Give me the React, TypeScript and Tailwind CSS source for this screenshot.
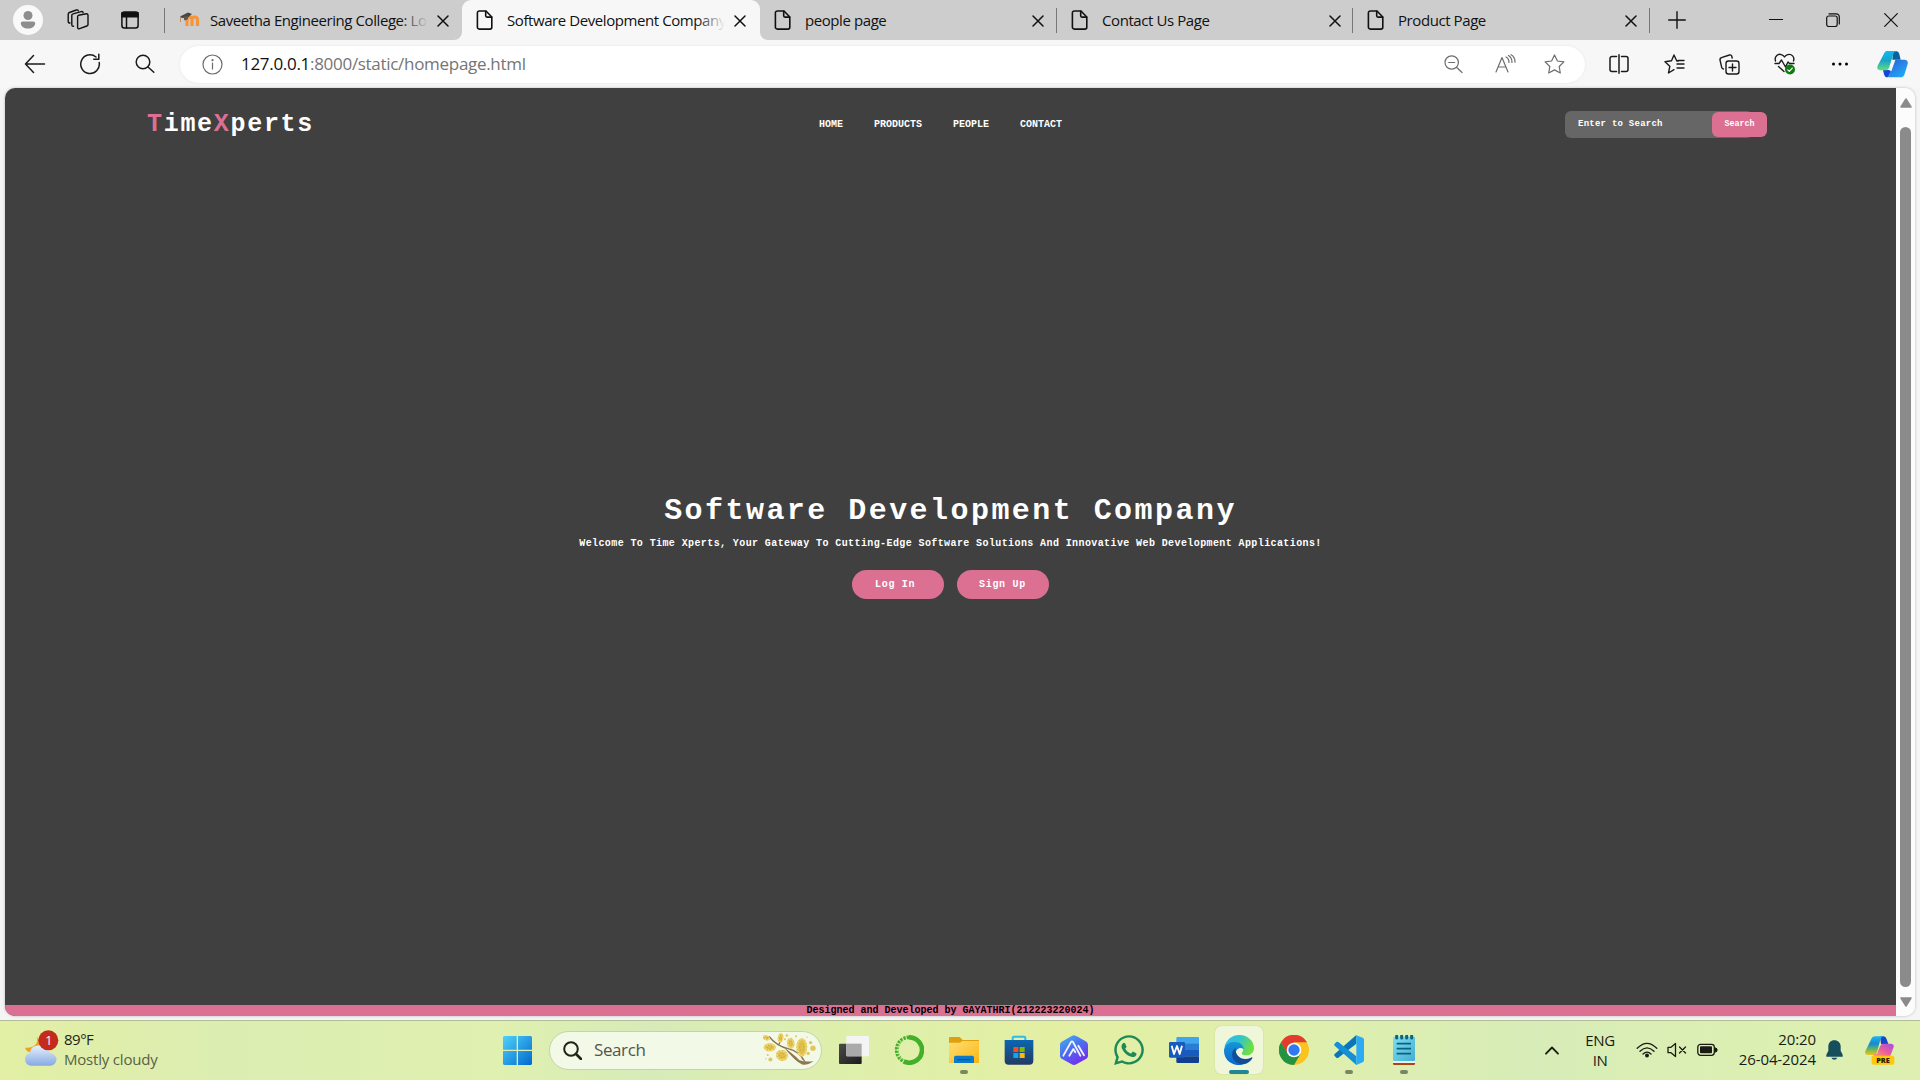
import type { ReactNode } from "react";
import { FaWhatsapp } from "react-icons/fa";

const UI = "font-['Open_Sans',sans-serif]";

function Stroke({ w, h, box, sw = 1.3, className = "", children }: { w: number; h: number; box?: string; sw?: number; className?: string; children: ReactNode }) {
  return (
    <svg width={w} height={h} viewBox={box ?? `0 0 ${w} ${h}`} fill="none" stroke="currentColor" strokeWidth={sw} strokeLinecap="round" strokeLinejoin="round" className={`shrink-0 ${className}`}>
      {children}
    </svg>
  );
}

function PageIcon() {
  return (
    <Stroke w={17} h={20} sw={1.6}>
      <path d="M3.3 1H10l5.8 6v10.2a1.9 1.9 0 0 1-1.9 1.9H3.3a1.9 1.9 0 0 1-1.9-1.9V2.9A1.9 1.9 0 0 1 3.3 1Z" />
      <path d="M9.7 1.2v4.6a1.3 1.3 0 0 0 1.3 1.3h4.6" />
    </Stroke>
  );
}

function CloseIcon() {
  return (
    <Stroke w={12} h={12} sw={1.5}>
      <path d="M1 1l10 10M11 1L1 11" />
    </Stroke>
  );
}

function MoodleIcon() {
  return (
    <svg width="22" height="16" viewBox="0 0 22 16" className="shrink-0">
      <path d="M8 14V8c0-4 5-4 5 0v6M13 8c0-4 5.500-4 5.500 0v6" fill="none" stroke="#f7933a" strokeWidth="3.200" />
      <path d="M1 4.500L9 .5l4 1.500-4 3.500-6 .5Z" fill="#4a4644" />
      <path d="M5 4.500v3.500c2 .6 3 -.2 4-1.500V4Z" fill="#5e5652" />
      <path d="M1.500 5v5" stroke="#c78b5a" strokeWidth="1" />
    </svg>
  );
}

function Tab({ title, width, icon, active = false, fade = false, sep = false }: { title: string; width: string; icon?: ReactNode; active?: boolean; fade?: boolean; sep?: boolean }) {
  return (
    <div className={`relative flex h-10 shrink-0 items-center ${width} ${active ? "rounded-t-[9px] bg-[#f7f7f7]" : ""}`}>
      {active && (
        <>
          <div className="absolute bottom-0 -left-2 h-2 w-2 bg-[#f7f7f7]"><div className="h-2 w-2 rounded-br-[8px] bg-[#cdcdcd]" /></div>
          <div className="absolute -right-2 bottom-0 h-2 w-2 bg-[#f7f7f7]"><div className="h-2 w-2 rounded-bl-[8px] bg-[#cdcdcd]" /></div>
        </>
      )}
      <div className="ml-[14px] flex w-[31px]">{icon ?? <PageIcon />}</div>
      <div className="relative -mt-px w-[218px] overflow-hidden text-[15px] leading-5 tracking-[-0.420px] whitespace-nowrap">
        {title}
        {fade && <div className={`absolute top-0 right-0 h-5 w-7 bg-gradient-to-r from-transparent ${active ? "to-[#f7f7f7]" : "to-[#cdcdcd]"}`} />}
      </div>
      <div className="ml-[9px] pt-px"><CloseIcon /></div>
      {sep && <div className="ml-auto h-[25px] w-px bg-[#777]" />}
    </div>
  );
}

function TitleBar() {
  return (
    <div className="flex h-10 items-center bg-[#cdcdcd] text-[#111]">
      <div className="ml-[13px] flex h-[30px] w-[30px] items-center justify-center rounded-full bg-[#f9f9f9]">
        <svg width="16" height="18" viewBox="0 0 16 18"><circle cx="8" cy="4.500" r="4.500" fill="#8e8e8e" /><path d="M2.500 10.500h11A1.700 1.700 0 0 1 15.200 12c0 3.500-3 5.500-7.200 5.500S.8 15.500.8 12a1.700 1.700 0 0 1 1.700-1.500Z" fill="#8e8e8e" /></svg>
      </div>
      <Stroke w={22} h={22} className="ml-6" sw={1.4}>
        <path d="M11.500 6.300l7.800-1.500a1.500 1.500 0 0 1 1.700 1.400v9.300c0 .8-.5 1.300-1.200 1.500l-7.200 2.700c-1 .4-2-.1-2-1.200V8c0-.9.300-1.500.9-1.700Z" />
        <path d="M6.500 17.300c-1 .1-1.700-.4-1.700-1.500V6.500c0-.9.500-1.400 1.300-1.600l8-2.300c1-.3 1.800 0 2 1" />
        <path d="M3 14c-1.200 0-1.800-.5-1.800-1.500V5.200c0-.9.400-1.400 1.200-1.700L9.300 1c1-.3 1.700 0 2 .8" />
      </Stroke>
      <Stroke w={18} h={18} className="ml-8" sw={1.5}>
        <rect x=".9" y=".9" width="16.200" height="16.200" rx="2.500" />
        <path d="M1 1.800h16v4H1Z" fill="currentColor" />
        <path d="M5.500 6v11" />
      </Stroke>
      <div className="ml-[25px] h-[25px] w-px bg-[#777]" />
      <Tab title="Saveetha Engineering College: Lo" width="w-[297px]" fade icon={<MoodleIcon />} />
      <Tab title="Software Development Company" width="w-[298px]" fade active />
      <Tab title="people page" width="w-[297px]" sep />
      <Tab title="Contact Us Page" width="w-[296px]" sep />
      <Tab title="Product Page" width="w-[297px]" sep />
      <Stroke w={18} h={18} className="ml-[18px]" sw={1.4}><path d="M9 .7v16.600M.7 9h16.600" /></Stroke>
      <Stroke w={14} h={14} className="ml-[83px]" sw={1.2}><path d="M.5 6.500h13" /></Stroke>
      <Stroke w={14} h={14} className="ml-[43px]" sw={1.2}><rect x=".7" y="3" width="10.500" height="10.500" rx="2" /><path d="M3 .8h7.300a3 3 0 0 1 3 3v7.200" /></Stroke>
      <Stroke w={14} h={14} className="ml-[44px]" sw={1.2}><path d="M.7 .7l12.600 12.600M13.300 .7L.7 13.300" /></Stroke>
    </div>
  );
}

function CopilotIcon() {
  return (
    <svg width="31" height="27" viewBox="0 0 93 81" className="shrink-0">
      <defs>
        <linearGradient id="cpA" x1="0" y1="0" x2="0" y2="1"><stop stopColor="#0cbaf2" /><stop offset=".5" stopColor="#18a5c8" /><stop offset="1" stopColor="#62de80" /></linearGradient>
        <linearGradient id="cpB" x1="0" y1="0" x2="1" y2="1"><stop stopColor="#1a5fcb" /><stop offset=".5" stopColor="#2a86ea" /><stop offset="1" stopColor="#16b9f4" /></linearGradient>
      </defs>
      <path d="M48 1h11c6 0 8 7 9 13l3 12H46Z" fill="#08639c" />
      <path d="M22 57h22l-8 16c-2 6-6 7-10 5-5-3-6-13-8-21Z" fill="#1247d4" />
      <path d="M56 26h26c8 0 12 5 10 13L83 68c-2 8-6 11-13 11H27c7-1 9-5 11-11l9-32c2-7 4-10 9-10Z" fill="url(#cpB)" />
      <path d="M37 58l10-31h8L43 61Z" fill="#f7f7f7" />
      <path d="M22 6c2-4 5-6 10-6h25c-5 2-7 6-9 12L37 48c-2 7-5 10-12 10H10C2 58-1 52 2 44Z" fill="url(#cpA)" />
    </svg>
  );
}

function Toolbar() {
  return (
    <div className="flex h-12 items-center bg-[#f7f7f7] text-[#1b1b1b]">
      <Stroke w={22} h={20} className="ml-6" sw={1.5}><path d="M20.500 10H1.500M9.500 1.500L1.500 10l8 8.500" /></Stroke>
      <Stroke w={22} h={22} className="ml-[33px]" sw={1.5}><path d="M20.200 9.500A9.300 9.300 0 1 1 17 4M19.800 1.300v5h-5" /></Stroke>
      <Stroke w={20} h={20} className="ml-[34px]" sw={1.5}><circle cx="8" cy="8" r="6.800" /><path d="M13 13l5.800 5.300" /></Stroke>
      <div className="ml-[25px] flex h-[37px] w-[1405px] items-center rounded-full bg-white text-[#6d6d6d] shadow-[0_0_3px_rgba(0,0,0,0.08)]">
        <Stroke w={21} h={21} className="ml-[22px]" sw={1.2}><circle cx="10.500" cy="10.500" r="9.500" /><path d="M10.500 9v6" /><circle cx="10.500" cy="6.200" r=".5" fill="currentColor" /></Stroke>
        <div className="ml-[18px] flex-1 text-[17px] leading-6 tracking-[-0.300px] whitespace-nowrap text-[#757575]"><span className="text-[#111]">127.0.0.1</span>:8000/static/homepage.html</div>
        <Stroke w={19} h={19} className="ml-px" sw={1.2}><circle cx="7.700" cy="7.500" r="6.700" /><path d="M4.700 7.500h6M12.700 12.500l5.300 5" /></Stroke>
        <Stroke w={21} h={20} className="ml-8" sw={1.2}><path d="M1 18L7 3.500 13 18M3 13h8M11 3c2 1 3 3 3 5.500M13.500 1.500c2.500 1.500 3.500 4 3.500 7M16 .7c3 1.500 4 4.300 4 7.500" /></Stroke>
        <Stroke w={21} h={20} className="mr-[20px] ml-[28px]" sw={1.2}><path d="M10.500 1l2.900 6 6.500.9-4.700 4.600 1.100 6.500-5.800-3.100L4.700 19l1.100-6.500L1.100 7.900l6.500-.9Z" /></Stroke>
      </div>
      <Stroke w={20} h={20} className="ml-[24px]" sw={1.5}><path d="M7.500 2.500H3a2 2 0 0 0-2 2v11a2 2 0 0 0 2 2h4.500M12.500 2.500H17a2 2 0 0 1 2 2v11a2 2 0 0 1-2 2h-4.500M10 .8v18.400" /></Stroke>
      <Stroke w={21} h={20} className="ml-[35px]" sw={1.4}><path d="M14.500 7H12.800L10 1 7.500 6.800 1 7.800l4.800 4.500L4.500 19l5.500-3.300M13 10h7M14 6.500h6M13 14h7" /></Stroke>
      <Stroke w={21} h={21} className="ml-[34px]" sw={1.4}><rect x="7" y="7" width="13" height="13" rx="2.500" /><path d="M13.500 10v7M10 13.500h7M4.500 15c-1-.1-1.600-.7-1.800-1.600L1 6c-.2-1.200.3-2 1.400-2.300L10.500 1c1.200-.3 2 .2 2.300 1.300l.4 1.700" /></Stroke>
      <svg width="22" height="22" viewBox="0 0 22 22" fill="none" stroke="currentColor" strokeWidth="1.400" strokeLinecap="round" strokeLinejoin="round" className="ml-[34px] shrink-0">
        <path d="M1.500 8C0 3.500 4 .5 7.200 1.600 9 2.200 10 3.200 10.500 4c.5-.8 1.500-1.800 3.300-2.400C17.500.5 21 4 19.500 8M1 10.500h4L7.500 7l4 7 2.500-5 1.500 1.500H20M4.500 13.500L10 18.500" />
        <circle cx="16" cy="16.500" r="5" fill="#0f7b0f" stroke="none" />
        <path d="M13.800 16.800l1.500 1.500 3-3.200" stroke="#fff" strokeWidth="1.200" />
      </svg>
      <svg width="18" height="6" viewBox="0 0 18 6" className="ml-[35px] shrink-0"><circle cx="2.500" cy="3" r="1.500" /><circle cx="9" cy="3" r="1.500" /><circle cx="15.500" cy="3" r="1.500" /></svg>
      <div className="ml-[28px]"><CopilotIcon /></div>
    </div>
  );
}

function WebPage() {
  return (
    <div className="mr-[5px] ml-[5px] flex h-[928px] overflow-hidden rounded-[10px] shadow-[0_0_3px_rgba(0,0,0,0.25)]">
      <div className="flex w-[1891px] flex-col bg-[#404040] font-['Liberation_Mono',monospace] font-bold text-white">
        <header className="grid h-[72px] grid-cols-[814px_746px_1fr] items-center">
          <div className="pt-[2px] pl-[142px] text-[25px] leading-8 tracking-[1.700px]"><span className="text-[#db7093]">T</span>ime<span className="text-[#db7093]">X</span>perts</div>
          <nav className="flex gap-[31px] pt-[2px] text-[10px] leading-4"><span>HOME</span><span>PRODUCTS</span><span>PEOPLE</span><span>CONTACT</span></nav>
          <div className="flex items-center">
            <div className="flex h-[27px] w-[188px] items-center rounded-md bg-[#666] pt-[2px] pl-[13px] text-[9px] tracking-[0.250px]">Enter to Search</div>
            <div className="-ml-[41px] flex h-[25px] w-[55px] items-center justify-center rounded-md bg-[#db7093] text-[8.300px]">Search</div>
          </div>
        </header>
        <main className="flex flex-1 flex-col items-center pt-[329px]">
          <h1 className="text-[30px] leading-[44px] tracking-[2.450px]">Software Development Company</h1>
          <p className="mt-[3px] text-[10px] leading-4 tracking-[0.400px]">Welcome To Time Xperts, Your Gateway To Cutting-Edge Software Solutions And Innovative Web Development Applications!</p>
          <div className="mt-[18px] flex gap-[13px] text-[10px] tracking-[0.700px]">
            <div className="flex h-[29px] w-[92px] items-center rounded-full bg-[#db7093] pl-[23px]">Log In</div>
            <div className="flex h-[29px] w-[92px] items-center rounded-full bg-[#db7093] pl-[22px]">Sign Up</div>
          </div>
        </main>
        <footer className="h-[11px] bg-[#db7093] text-center text-[10px] leading-[11px] text-black">Designed and Developed by GAYATHRI(212223220024)</footer>
      </div>
      <div className="flex flex-1 flex-col items-center bg-[#fcfcfc]">
        <svg width="12" height="10" viewBox="0 0 12 10" className="mt-[10px] shrink-0"><path d="M6 1l5 8H1Z" fill="#8b8b8b" stroke="#8b8b8b" strokeWidth="1.500" strokeLinejoin="round" /></svg>
        <div className="mt-[19px] h-[860px] w-[11px] rounded-full bg-[#8b8b8b]" />
        <svg width="12" height="10" viewBox="0 0 12 10" className="mt-[10px] shrink-0"><path d="M6 9L1 1h10Z" fill="#8b8b8b" stroke="#8b8b8b" strokeWidth="1.500" strokeLinejoin="round" /></svg>
      </div>
    </div>
  );
}

function Weather() {
  return (
    <div className="flex w-[478px] items-center pl-[24px]">
      <svg width="35" height="36" viewBox="0 0 105 108" className="-mt-[6px] shrink-0">
        <defs><linearGradient id="cl" x1="0" y1="0" x2="0" y2="1"><stop stopColor="#e6f0fd" /><stop offset="1" stopColor="#86a9e3" /></linearGradient></defs>
        <path d="M38 20c8 18-8 36-35 33 5 14 20 18 34 12s22-28 1-45Z" fill="#f2a01f" />
        <path d="M20 107a20 20 0 0 1-2-39 24 24 0 0 1 44-10 22 22 0 0 1 18 12 18 18 0 0 1-2 37Z" fill="url(#cl)" />
        <circle cx="73" cy="31" r="30" fill="#c42b1c" />
        <text x="74" y="44" fill="#fff" fontSize="37" textAnchor="middle" fontFamily="Open Sans">1</text>
      </svg>
      <div className="-mt-[4px] ml-[5px] text-[15px] leading-5 tracking-[-0.200px]"><div className="tracking-[-0.500px]">89°F</div><div className="text-[#5a6049]">Mostly cloudy</div></div>
    </div>
  );
}

function WindowsIcon() {
  return (
    <svg width="29" height="29" viewBox="0 0 87 87" className="ml-[25px] shrink-0">
      <defs><linearGradient id="win" gradientUnits="userSpaceOnUse" x1="0" y1="0" x2="87" y2="87"><stop stopColor="#4fd2fb" /><stop offset="1" stopColor="#0268cd" /></linearGradient></defs>
      <path d="M3 0h38v41H0V3ZM45 0h39l3 3v38H45ZM0 45h41v42H3l-3-3ZM45 45h42v39l-3 3H45Z" fill="url(#win)" />
    </svg>
  );
}

function Branch() {
  const pods = [
    [10, 14, 11, 7, 15], [52, 14, 8, 14, 10], [20, 42, 18, 12, 0], [82, 30, 11, 16, -8], [115, 42, 16, 27, 0], [56, 66, 18, 16, 20],
  ];
  const dots = [[22, 78, 6], [8, 76, 2], [14, 65, 3], [141, 28, 5], [148, 45, 8], [134, 60, 5], [131, 12, 2], [98, 9, 3], [71, 7, 4], [65, 18, 3]];
  return (
    <svg width="54" height="34" viewBox="0 0 160 100" className="mr-[4px] shrink-0">
      <path d="M18 10Q40 38 74 46T124 84M52 22L46 36M110 60L118 78" fill="none" stroke="#8c7550" strokeWidth="4" />
      <path d="M60 40Q102 72 108 80Q125 86 150 83Q130 96 116 93Q96 84 60 40Z" fill="#8e7750" />
      {pods.map(([x, y, a, b, r], i) => (
        <g key={i} transform={`rotate(${r} ${x} ${y})`}>
          <ellipse cx={x} cy={y} rx={a} ry={b} fill="#e0c14f" />
          <ellipse cx={x} cy={y} rx={a - 3} ry={b - 3} fill="none" stroke="#f0da78" strokeWidth="5" strokeDasharray="6 3" />
          <ellipse cx={x} cy={y} rx={a / 2.5} ry={b / 2.5} fill="none" stroke="#d0a935" strokeWidth="3" strokeDasharray="4 4" />
        </g>
      ))}
      {dots.map(([x, y, r], i) => <circle key={i} cx={x} cy={y} r={r} fill="#dfc65f" />)}
    </svg>
  );
}

function App90({ children }: { children: ReactNode }) {
  return <svg width="30" height="30" viewBox="0 0 90 90">{children}</svg>;
}

function AppCell({ children, run = false, active = false }: { children: ReactNode; run?: boolean; active?: boolean }) {
  return (
    <div className="flex h-[48px] w-[55px] items-center justify-center">
      <div className={`relative flex h-12 w-12 items-center justify-center rounded-md ${active ? "bg-[#f0f6da] shadow-[0_0_1px_rgba(0,0,0,0.25)]" : ""}`}>
        {children}
        {run && <div className="absolute bottom-0 h-1 w-2 rounded-full bg-[#7b8562]" />}
        {active && <div className="absolute bottom-0 h-1 w-5 rounded-full bg-[#218694]" />}
      </div>
    </div>
  );
}

function Apps() {
  return (
    <div className="-mt-px ml-[4px] flex items-center">
      <AppCell>
        <App90>
          <defs><linearGradient id="tv" x1="0" y1="0" x2="1" y2="1"><stop stopColor="#4a4a4a" /><stop offset="1" stopColor="#1c1c1c" /></linearGradient></defs>
          <rect x="0" y="26" width="68" height="61" rx="3" fill="url(#tv)" />
          <rect x="22" y="3" width="68" height="61" rx="3" fill="#f4f4f4" />
          <rect x="22" y="26" width="46" height="38" fill="#aaa" />
        </App90>
      </AppCell>
      <AppCell>
        <App90>
          <path d="M45 7a38 38 0 1 1-16 72" fill="none" stroke="#43b02a" strokeWidth="14" />
          <path d="M45 7A38 38 0 0 0 29 79" fill="none" stroke="#43b02a" strokeWidth="11" strokeDasharray="7 3" />
          <path d="M40 13A33 33 0 0 0 25 73" fill="none" stroke="#ddeeb2" strokeWidth="3" strokeDasharray="5 6" />
        </App90>
      </AppCell>
      <AppCell run>
        <App90>
          <defs><linearGradient id="fd" x1="0" y1="0" x2="1" y2="1"><stop stopColor="#ffdf73" /><stop offset="1" stopColor="#fbb514" /></linearGradient></defs>
          <path d="M0 10q0-4 4-4h25q4 0 6 3l6 6h49v12H0Z" fill="#dfa00d" />
          <path d="M0 23h30q4 0 7-3l3-2h50v66H0Z" fill="url(#fd)" />
          <path d="M15 84V67q0-5 5-5h50q5 0 5 5v17Z" fill="#0d79cb" /><path d="M27 74h37" stroke="#0a4f8d" strokeWidth="3" strokeLinecap="round" />
        </App90>
      </AppCell>
      <AppCell>
        <App90>
          <defs><linearGradient id="st" x1="0" y1="0" x2="0" y2="1"><stop stopColor="#0c66b1" /><stop offset="1" stopColor="#243a63" /></linearGradient></defs>
          <path d="M26 17V9q0-4 4-4h30q4 0 4 4v8" fill="none" stroke="#27bdf0" strokeWidth="6" />
          <path d="M2 15h86v62q0 12-12 12H14Q2 89 2 77Z" fill="url(#st)" />
          <path d="M28 36h15v15H28Z" fill="#f25022" /><path d="M47 36h15v15H47Z" fill="#7fba00" /><path d="M28 54h15v15H28Z" fill="#12a5ef" /><path d="M47 54h15v15H47Z" fill="#ffb902" />
        </App90>
      </AppCell>
      <AppCell>
        <App90>
          <defs><linearGradient id="hx" x1="0" y1="0" x2=".6" y2="1"><stop stopColor="#45b7ed" /><stop offset=".5" stopColor="#4b70ef" /><stop offset="1" stopColor="#742ff0" /></linearGradient></defs>
          <path d="M45 1Q50 1 80 19Q87 23 87 29V63Q87 68 82 71L52 88Q45 92 38 88L8 71Q3 68 3 62V28Q3 23 8 20L38 3Q42 1 45 1Z" fill="url(#hx)" />
          <path d="M13 62L36 21q3-4 6 0L64 62M31 62L43 42L49 52M58 32L75 61" fill="none" stroke="#f1f3ff" strokeWidth="5.500" strokeLinecap="round" strokeLinejoin="round" />
        </App90>
      </AppCell>
      <AppCell><FaWhatsapp size={34} color="#1d8a58" /></AppCell>
      <AppCell>
        <App90>
          <path d="M26 6h61q3 0 3 3v19H22V9q0-3 4-3Z" fill="#41a5ee" /><path d="M22 26h68v20H22Z" fill="#2b7cd3" /><path d="M22 45h68v19H22Z" fill="#185abd" /><path d="M22 64h68v17q0 3-3 3H26q-4 0-4-3Z" fill="#103f91" />
          <rect x="0" y="21" width="48" height="47" rx="4" fill="#185abd" />
          <path d="M8 32l7 25 9-24 8 24 7-25" fill="none" stroke="#fff" strokeWidth="5.500" strokeLinejoin="round" />
        </App90>
      </AppCell>
      <AppCell active>
        <App90>
          <defs>
            <linearGradient id="e1" x1="0" y1="0" x2="1" y2=".4"><stop stopColor="#35b8ef" /><stop offset=".5" stopColor="#2fc3d0" /><stop offset="1" stopColor="#6de042" /></linearGradient>
            <linearGradient id="e2" x1="0" y1="0" x2="0" y2="1"><stop stopColor="#1596d9" /><stop offset="1" stopColor="#0c67cb" /></linearGradient>
          </defs>
          <path d="M1 38C6 14 24 0 46 0c25 0 44 18 44 39 0 15-11 22-24 22-10 0-15-4-11-9 8-12-2-25-18-25C20 27 6 30 1 38Z" fill="url(#e1)" />
          <path d="M0 46c2-17 16-26 31-25 19 0 29 12 28 22-11-9-24 0-24 13 0 16 14 29 23 32C28 97-1 77 0 46Z" fill="url(#e2)" />
          <path d="M35 38c-19 13-13 48 24 50 12-2 22-10 26-18 1-3-1-4-4-2-27 12-49-6-46-30Z" fill="#124e98" />
        </App90>
      </AppCell>
      <AppCell>
        <App90>
          <circle cx="45" cy="45" r="45" fill="#fcc31e" />
          <path d="M6 22A45 45 0 0 1 84 22H45L25 57Z" fill="#e33b2e" />
          <path d="M6 22A45 45 0 0 0 45 90L65 56L26 56Z" fill="#229342" />
          <circle cx="45" cy="45" r="22" fill="#fff" /><circle cx="45" cy="45" r="17" fill="#2f7af1" />
        </App90>
      </AppCell>
      <AppCell run>
        <App90>
          <path d="M67 0V26L13 68q-3 2-6 0l-5-5q-3-3 0-6Z" fill="#0876b9" />
          <path d="M67 90V64L13 21q-3-2-6 0L2 26q-3 3 0 6Z" fill="#168fd5" />
          <path d="M65 0L86 8q4 2 4 6v62q0 4-4 6L67 90Q64 89 67 84V7Q67 2 65 0Z" fill="#2aabf4" />
        </App90>
      </AppCell>
      <AppCell run>
        <App90>
          <defs><linearGradient id="np" x1="0" y1="0" x2="1" y2="1"><stop stopColor="#80dff3" /><stop offset="1" stopColor="#42aed0" /></linearGradient></defs>
          <rect x="12" y="74" width="66" height="16" rx="4" fill="#a8480f" /><rect x="12" y="70" width="66" height="14" fill="#eee" />
          <rect x="12" y="5" width="66" height="73" rx="4" fill="url(#np)" />
          <path d="M23 26h43M23 41h43M23 56h43" stroke="#105f7d" strokeWidth="5" />
          <path d="M23 3v6M38 3v6M53 3v6M68 3v6" stroke="#0b657e" strokeWidth="9" strokeLinecap="round" />
        </App90>
      </AppCell>
    </div>
  );
}

function Tray() {
  return (
    <div className="-mt-px ml-auto flex items-center text-[#1a1c14]">
      <Stroke w={14} h={9} className="mr-px" sw={1.8}><path d="M1 7.700L7 1.500l6 6.200" /></Stroke>
      <div className="-mt-px ml-[19px] w-[42px] text-center text-[15px] leading-5 tracking-[-0.400px]">ENG<br />IN</div>
      <Stroke w={22} h={16} className="ml-[15px]" sw={1.3}>
        <path d="M1.200 6.300Q11-3.500 20.800 6.300M4 9.200q7-6.600 14 0M7 12q4-3.800 8 0" /><circle cx="11" cy="13.500" r="1.300" fill="currentColor" />
      </Stroke>
      <Stroke w={20} h={16} className="ml-[9px]" sw={1.3}><path d="M1 5.300h3L8.500 1.500v13L4 10.700H1ZM12.500 5l6 6M18.500 5l-6 6" /></Stroke>
      <svg width="21" height="14" viewBox="0 0 21 14" className="ml-[10px] shrink-0"><rect x=".8" y="1.300" width="16.500" height="11" rx="2.800" fill="none" stroke="currentColor" strokeWidth="1.300" /><rect x="3" y="3.300" width="12" height="7" rx="1" fill="currentColor" /><path d="M18 5h1l1 1v2l-1 1h-1Z" fill="currentColor" stroke="currentColor" /></svg>
      <div className="-mt-[3px] ml-[16px] w-[82px] text-right text-[15px] leading-5 tracking-[-0.100px] whitespace-nowrap">20:20<br />26-04-2024</div>
      <svg width="17" height="20" viewBox="0 0 51 60" className="ml-[10px] shrink-0"><path d="M25 1C14 1 7 9 7 20v12L1 44v6h49v-6l-6-12V20C44 9 36 1 25 1Z" fill="#164e5c" /><path d="M16 53h18q-3 6-9 6t-9-6Z" fill="#164e5c" /></svg>
      <svg width="30" height="30" viewBox="0 0 90 90" className="mr-[25px] ml-[22px] shrink-0">
        <defs>
          <linearGradient id="c1" x1="0" y1="0" x2="0" y2="1"><stop stopColor="#1fb4f0" /><stop offset=".4" stopColor="#1689d6" /><stop offset=".7" stopColor="#69b85d" /><stop offset="1" stopColor="#f3c316" /></linearGradient>
          <linearGradient id="c2" x1="1" y1="0" x2="0" y2="1"><stop stopColor="#a44bee" /><stop offset=".5" stopColor="#ec6093" /><stop offset="1" stopColor="#ffae68" /></linearGradient>
        </defs>
        <path d="M45 4h11q6 0 9 9l5 14H48Z" fill="#1747c7" />
        <path d="M20 10q3-6 10-6h24q-6 4-8 10L36 52q-2 8-10 8H8q-10-1-7-11Z" fill="url(#c1)" />
        <path d="M55 26h24q9 2 7 10l-8 22q-2 8-10 8H18q7-1 10-10h8l9-22q3-8 10-8Z" fill="url(#c2)" />
        <rect x="20" y="62" width="68" height="27" rx="6" fill="#ffc80a" />
        <text x="54" y="83" fontSize="22" fontWeight="800" textAnchor="middle" fontFamily="Open Sans" fill="#251c00">PRE</text>
      </svg>
    </div>
  );
}

function Taskbar() {
  return (
    <div className="mt-[4px] flex h-[60px] items-center border-t border-[#b3bc97] bg-[linear-gradient(90deg,#e2efa4_0%,#dcedb2_12%,#dff0b0_26%,#d6ebb8_34%,#deefad_43%,#e3efa3_55%,#dfefad_68%,#d7ecb8_80%,#dcefb3_90%,#deefb0_100%)] text-[#20231a]">
      <Weather />
      <WindowsIcon />
      <div className="-mt-px ml-[17px] flex h-[39px] w-[273px] shrink-0 items-center rounded-full border border-[#c6d3a9] bg-[#f3f9e7]">
        <Stroke w={19} h={19} className="ml-[13px]" sw={2}><circle cx="8" cy="8" r="6.800" /><path d="M13 13l5 5" strokeWidth="2.600" /></Stroke>
        <div className="ml-[12px] flex-1 text-[17px] tracking-[-0.400px] text-[#52564a]">Search</div>
        <Branch />
      </div>
      <Apps />
      <Tray />
    </div>
  );
}

export default function App() {
  return (
    <div className={`h-[1080px] w-[1920px] overflow-hidden bg-[#f5f5f5] ${UI}`}>
      <TitleBar />
      <Toolbar />
      <WebPage />
      <Taskbar />
    </div>
  );
}
